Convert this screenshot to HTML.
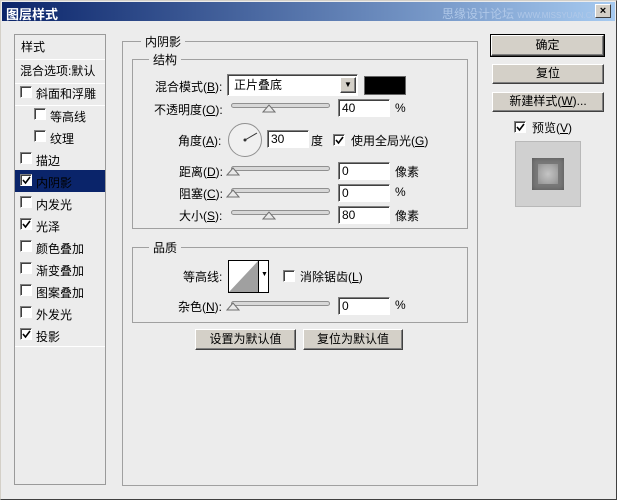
<!DOCTYPE html>
<html><head><meta charset="utf-8"><style>
*{margin:0;padding:0;box-sizing:border-box}
body{width:617px;height:500px;background:#ececec;font-family:"Liberation Sans","Noto Sans CJK SC","WenQuanYi Zen Hei",sans-serif;font-size:12px;color:#000;position:relative;overflow:hidden}
.a{position:absolute;white-space:nowrap}
.win{position:absolute;left:0;top:0;width:617px;height:500px;border:1px solid #d4d0c8;border-right-color:#404040;border-bottom-color:#404040}
.title{position:absolute;left:2px;top:2px;width:613px;height:19px;background:linear-gradient(90deg,#0a246a,#a6caf0)}
.box{position:absolute;border:1px solid #9a9a9a}
.grp{position:absolute;border:1px solid #a0a0a0}
.lbl{position:absolute;background:#ececec;padding:0 4px;font-size:12px}
.cb{position:absolute;width:12px;height:12px;border:1px solid #808080;border-right-color:#fff;border-bottom-color:#fff;background:#fff;box-shadow:inset 1px 1px 0 #404040}
.cb svg{position:absolute;left:1px;top:1px}
.inp{position:absolute;height:18px;background:#fff;border:1px solid #808080;border-right-color:#fff;border-bottom-color:#fff;box-shadow:inset 1px 1px 0 #404040;padding-left:3px;font-size:12px;line-height:16px}
.sl{position:absolute;height:5px;border-radius:3px;background:#d8d8d8;border:1px solid #909090}
.btn{position:absolute;background:#d4d0c8;border:1px solid #fff;border-right-color:#404040;border-bottom-color:#404040;box-shadow:inset -1px -1px 0 #808080;text-align:center;line-height:17px;font-size:12px}
.item{position:absolute;left:15px;width:90px;height:22px;border-bottom:1px solid #fff}
</style></head><body>
<div class="win"></div>
<div class="title"></div>
<div class="a" style="left:6px;top:4px;color:#fff;font-weight:bold;font-size:13px">图层样式</div>
<div class="a" style="left:442px;top:5px;color:#b0c8e8;font-size:12px">思缘设计论坛 <span style="font-size:8px">WWW.MISSYUAN.COM</span></div>
<div class="a" style="left:595px;top:4px;width:16px;height:14px;background:#d4d0c8;border:1px solid #fff;border-right-color:#404040;border-bottom-color:#404040;font-size:11px;line-height:12px;text-align:center;font-weight:bold">×</div>

<div class="box" style="left:14px;top:34px;width:92px;height:451px"></div>
<div class="item" style="top:35px;height:25px"></div>
<div class="a" style="left:21px;top:38px">样式</div>
<div class="item" style="top:60px;height:24px"></div>
<div class="a" style="left:20px;top:62px">混合选项:默认</div>
<div class="item" style="top:170px;background:#0a246a;border:none"></div>
<div class="item" style="top:84px"></div>
<div class="cb" style="left:20px;top:86px"></div><div class="a" style="left:36px;top:85px">斜面和浮雕</div>
<div class="cb" style="left:34px;top:108px"></div><div class="a" style="left:50px;top:108px">等高线</div>
<div class="cb" style="left:34px;top:130px"></div><div class="a" style="left:50px;top:130px">纹理</div>
<div class="cb" style="left:20px;top:152px"></div><div class="a" style="left:36px;top:152px">描边</div>
<div class="cb" style="left:20px;top:174px"><svg width="9" height="9"><path d="M1 4 L3.5 7 L8 1" fill="none" stroke="#000" stroke-width="1.6"/></svg></div><div class="a" style="left:36px;top:174px">内阴影</div>
<div class="cb" style="left:20px;top:196px"></div><div class="a" style="left:36px;top:196px">内发光</div>
<div class="cb" style="left:20px;top:218px"><svg width="9" height="9"><path d="M1 4 L3.5 7 L8 1" fill="none" stroke="#000" stroke-width="1.6"/></svg></div><div class="a" style="left:36px;top:218px">光泽</div>
<div class="cb" style="left:20px;top:240px"></div><div class="a" style="left:36px;top:240px">颜色叠加</div>
<div class="cb" style="left:20px;top:262px"></div><div class="a" style="left:36px;top:262px">渐变叠加</div>
<div class="cb" style="left:20px;top:284px"></div><div class="a" style="left:36px;top:284px">图案叠加</div>
<div class="cb" style="left:20px;top:306px"></div><div class="a" style="left:36px;top:306px">外发光</div>
<div class="cb" style="left:20px;top:328px"><svg width="9" height="9"><path d="M1 4 L3.5 7 L8 1" fill="none" stroke="#000" stroke-width="1.6"/></svg></div><div class="a" style="left:36px;top:328px">投影</div>
<div class="a" style="left:15px;top:346px;width:90px;height:1px;background:#fff"></div>

<div class="grp" style="left:122px;top:41px;width:356px;height:445px"></div>
<div class="lbl" style="left:141px;top:33px">内阴影</div>
<div class="grp" style="left:132px;top:59px;width:336px;height:170px"></div>
<div class="lbl" style="left:149px;top:51px">结构</div>

<div class="a" style="left:155px;top:78px">混合模式(<u>B</u>):</div>
<div class="inp" style="left:227px;top:74px;width:131px;height:22px;line-height:20px;padding-left:6px">正片叠底</div>
<div class="btn" style="left:340px;top:77px;width:16px;height:16px;font-size:8px;line-height:14px">▼</div>
<div class="a" style="left:364px;top:76px;width:42px;height:19px;background:#000;border:1px solid #666"></div>

<div class="a" style="left:154px;top:101px">不透明度(<u>O</u>):</div>
<div class="sl" style="left:231px;top:103px;width:99px"></div>
<svg class="a" style="left:262px;top:104px" width="14" height="9"><path d="M1 8 L7 1 L13 8 Z" fill="#e8e8e8" stroke="#707070"/></svg>
<div class="inp" style="left:338px;top:99px;width:52px">40</div>
<div class="a" style="left:395px;top:101px">%</div>

<div class="a" style="left:178px;top:132px">角度(<u>A</u>):</div>
<svg class="a" style="left:227px;top:122px" width="37" height="37"><circle cx="18" cy="18" r="16.5" fill="#f0f0f0" stroke="#909090"/><line x1="18" y1="18" x2="30" y2="11" stroke="#333"/><circle cx="18" cy="18" r="1.5" fill="#333"/></svg>
<div class="inp" style="left:267px;top:130px;width:42px">30</div>
<div class="a" style="left:311px;top:132px">度</div>
<div class="cb" style="left:333px;top:134px"><svg width="9" height="9"><path d="M1 4 L3.5 7 L8 1" fill="none" stroke="#000" stroke-width="1.6"/></svg></div>
<div class="a" style="left:351px;top:132px">使用全局光(<u>G</u>)</div>

<div class="a" style="left:179px;top:163px">距离(<u>D</u>):</div>
<div class="sl" style="left:231px;top:166px;width:99px"></div>
<svg class="a" style="left:226px;top:167px" width="14" height="9"><path d="M1 8 L7 1 L13 8 Z" fill="#e8e8e8" stroke="#707070"/></svg>
<div class="inp" style="left:338px;top:162px;width:52px">0</div>
<div class="a" style="left:395px;top:163px">像素</div>

<div class="a" style="left:179px;top:185px">阻塞(<u>C</u>):</div>
<div class="sl" style="left:231px;top:188px;width:99px"></div>
<svg class="a" style="left:226px;top:189px" width="14" height="9"><path d="M1 8 L7 1 L13 8 Z" fill="#e8e8e8" stroke="#707070"/></svg>
<div class="inp" style="left:338px;top:184px;width:52px">0</div>
<div class="a" style="left:395px;top:185px">%</div>

<div class="a" style="left:179px;top:207px">大小(<u>S</u>):</div>
<div class="sl" style="left:231px;top:210px;width:99px"></div>
<svg class="a" style="left:262px;top:211px" width="14" height="9"><path d="M1 8 L7 1 L13 8 Z" fill="#e8e8e8" stroke="#707070"/></svg>
<div class="inp" style="left:338px;top:206px;width:52px">80</div>
<div class="a" style="left:395px;top:207px">像素</div>

<div class="grp" style="left:132px;top:247px;width:336px;height:76px"></div>
<div class="lbl" style="left:149px;top:239px">品质</div>
<div class="a" style="left:183px;top:268px">等高线:</div>
<div class="a" style="left:228px;top:260px;width:41px;height:33px;border:1px solid #000;background:#fff"></div>
<svg class="a" style="left:229px;top:261px" width="30" height="31"><path d="M0 31 L29 0 L29 31 Z" fill="#a0a0a0"/></svg>
<div class="a" style="left:258px;top:261px;width:1px;height:31px;background:#000"></div>
<div class="a" style="left:261px;top:271px;font-size:7px">▼</div>
<div class="cb" style="left:283px;top:270px"></div>
<div class="a" style="left:300px;top:268px">消除锯齿(<u>L</u>)</div>

<div class="a" style="left:178px;top:298px">杂色(<u>N</u>):</div>
<div class="sl" style="left:231px;top:301px;width:99px"></div>
<svg class="a" style="left:226px;top:302px" width="14" height="9"><path d="M1 8 L7 1 L13 8 Z" fill="#e8e8e8" stroke="#707070"/></svg>
<div class="inp" style="left:338px;top:297px;width:52px">0</div>
<div class="a" style="left:395px;top:298px">%</div>

<div class="btn" style="left:195px;top:329px;width:101px;height:21px;line-height:18px">设置为默认值</div>
<div class="btn" style="left:303px;top:329px;width:100px;height:21px;line-height:18px">复位为默认值</div>

<div class="btn" style="left:491px;top:35px;width:113px;height:21px;line-height:18px;outline:1px solid #000">确定</div>
<div class="btn" style="left:492px;top:64px;width:112px;height:20px">复位</div>
<div class="btn" style="left:492px;top:92px;width:112px;height:20px">新建样式(<u>W</u>)...</div>
<div class="cb" style="left:514px;top:121px"><svg width="9" height="9"><path d="M1 4 L3.5 7 L8 1" fill="none" stroke="#000" stroke-width="1.6"/></svg></div>
<div class="a" style="left:532px;top:119px">预览(<u>V</u>)</div>
<div class="a" style="left:515px;top:141px;width:66px;height:66px;background:#d0d0d0;border:1px solid #b8b8b8"></div>
<div class="a" style="left:532px;top:158px;width:32px;height:32px;background:#7a7a7a;box-shadow:inset 0 0 6px #555"></div>
<div class="a" style="left:538px;top:164px;width:20px;height:20px;background:radial-gradient(circle,#c4c4c4 0%,#a8a8a8 60%,#909090 100%)"></div>
</body></html>
